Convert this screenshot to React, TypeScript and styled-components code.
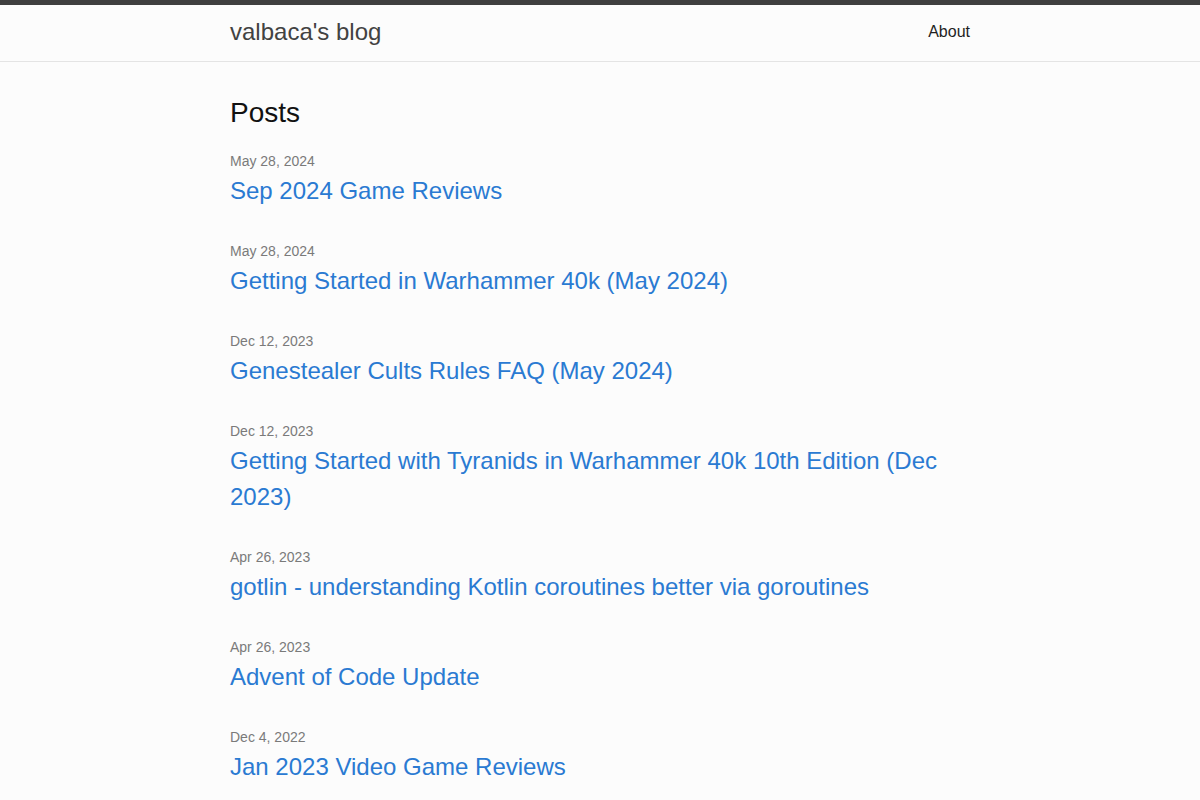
import React from "react";
import styled, { createGlobalStyle } from "styled-components";

const GlobalStyle = createGlobalStyle`
  html, body {
    margin: 0;
    padding: 0;
    background: #fcfcfc;
  }
  body {
    font-family: "Liberation Sans", Arial, Helvetica, sans-serif;
    color: #111;
    -webkit-font-smoothing: antialiased;
  }
  * { box-sizing: border-box; }
`;

const Page = styled.div`
  min-height: 800px;
  border-top: 5px solid #3f3f3f;
  background: #fcfcfc;
`;

const Header = styled.header`
  height: 57px;
  border-bottom: 1px solid #e4e4e4;
`;

const Wrapper = styled.div`
  width: 740px;
  margin: 0 auto;
`;

const HeaderInner = styled(Wrapper)`
  height: 56px;
  display: flex;
  align-items: center;
  justify-content: space-between;
`;

const SiteTitle = styled.a`
  font-size: 24px;
  line-height: 36px;
  color: #424242;
  text-decoration: none;
  margin-top: -2px;
`;

const Nav = styled.nav`
  display: flex;
  gap: 20px;
`;

const NavLink = styled.a`
  font-size: 16px;
  line-height: 24px;
  color: #1f1f1f;
  text-decoration: none;
  margin-top: -2px;
`;

const Main = styled(Wrapper)`
  padding-top: 30px;
`;

const Heading = styled.h1`
  margin: 0 0 17px;
  font-size: 28px;
  line-height: 42px;
  font-weight: 400;
  color: #111;
`;

const PostList = styled.ul`
  list-style: none;
  margin: 0;
  padding: 0;
  display: flex;
  flex-direction: column;
  gap: 32px;
`;

const PostItem = styled.li`
  display: flex;
  flex-direction: column;
`;

const PostMeta = styled.span`
  font-size: 14px;
  line-height: 21px;
  padding-bottom: 1px;
  color: #7a7a7a;
`;

const PostLink = styled.a`
  font-size: 24px;
  line-height: 36px;
  color: #2a7ad2;
  text-decoration: none;
`;

const posts = [
  { date: "May 28, 2024", title: "Sep 2024 Game Reviews" },
  { date: "May 28, 2024", title: "Getting Started in Warhammer 40k (May 2024)" },
  { date: "Dec 12, 2023", title: "Genestealer Cults Rules FAQ (May 2024)" },
  {
    date: "Dec 12, 2023",
    title: "Getting Started with Tyranids in Warhammer 40k 10th Edition (Dec 2023)",
  },
  {
    date: "Apr 26, 2023",
    title: "gotlin - understanding Kotlin coroutines better via goroutines",
  },
  { date: "Apr 26, 2023", title: "Advent of Code Update" },
  { date: "Dec 4, 2022", title: "Jan 2023 Video Game Reviews" },
];

export default function App() {
  return (
    <>
      <GlobalStyle />
      <Page>
        <Header>
          <HeaderInner>
            <SiteTitle href="#">valbaca's blog</SiteTitle>
            <Nav>
              <NavLink href="#">About</NavLink>
            </Nav>
          </HeaderInner>
        </Header>
        <Main>
          <Heading>Posts</Heading>
          <PostList>
            {posts.map((p, i) => (
              <PostItem key={i}>
                <PostMeta>{p.date}</PostMeta>
                <PostLink href="#">{p.title}</PostLink>
              </PostItem>
            ))}
          </PostList>
        </Main>
      </Page>
    </>
  );
}
